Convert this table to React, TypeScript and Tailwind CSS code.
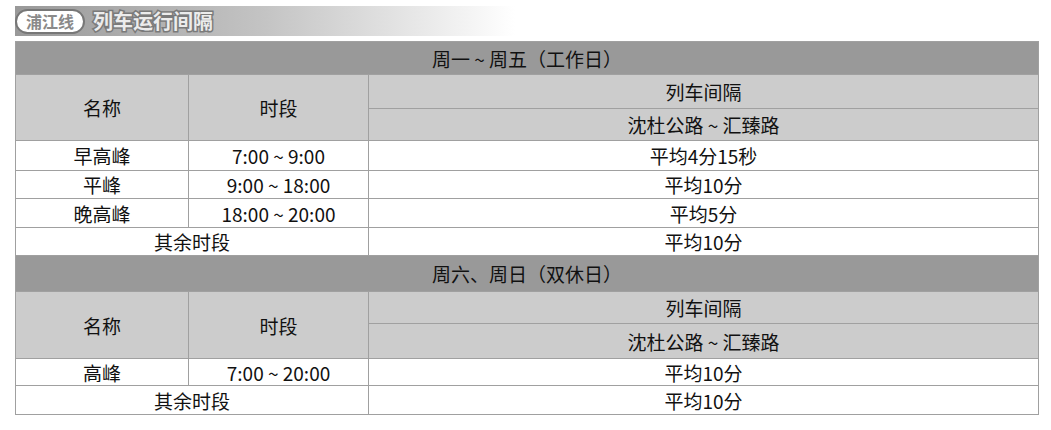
import React from 'react';

const font = { fontFamily: '"Noto Sans CJK SC", "Noto Sans", sans-serif' };

type Row = { name?: string; time?: string; span?: string; value: string; h: string };

const weekday: Row[] = [
  { name: '早高峰', time: '7:00 ~ 9:00', value: '平均4分15秒', h: 'h-[30px]' },
  { name: '平峰', time: '9:00 ~ 18:00', value: '平均10分', h: 'h-[28px]' },
  { name: '晚高峰', time: '18:00 ~ 20:00', value: '平均5分', h: 'h-[29px]' },
  { span: '其余时段', value: '平均10分', h: 'h-[28px]' },
];

const weekend: Row[] = [
  { name: '高峰', time: '7:00 ~ 20:00', value: '平均10分', h: 'h-[27px]' },
  { span: '其余时段', value: '平均10分', h: 'h-[29px]' },
];

const cell = 'border border-[#a0a0a0] p-0 text-center align-middle font-normal';

const Section = ({ title, rows, barH, h1, h2 }: { title: string; rows: Row[]; barH: string; h1: string; h2: string }) => (
  <>
    <tr className={barH}>
      <th colSpan={3} className={`${cell} bg-[#999999]`}>{title}</th>
    </tr>
    <tr className={h1}>
      <th rowSpan={2} className={`${cell} bg-[#cccccc]`}>名称</th>
      <th rowSpan={2} className={`${cell} bg-[#cccccc]`}>时段</th>
      <th className={`${cell} bg-[#cccccc]`}>列车间隔</th>
    </tr>
    <tr className={h2}>
      <th className={`${cell} bg-[#cccccc]`}>沈杜公路 ~ 汇臻路</th>
    </tr>
    {rows.map((r, i) => (
      <tr key={i} className={r.h}>
        {r.span ? (
          <td colSpan={2} className={cell}>{r.span}</td>
        ) : (
          <>
            <td className={cell}>{r.name}</td>
            <td className={cell}>{r.time}</td>
          </>
        )}
        <td className={cell}>{r.value}</td>
      </tr>
    ))}
  </>
);

export default function App() {
  return (
    <div className="w-[1051px] h-[430px] bg-white text-[#111] overflow-hidden" style={font}>
      <div className="pl-[15px] pt-[6px] h-[36px]">
        <div className="flex items-center h-[30px] w-[500px] bg-gradient-to-r from-[#999999] via-[#c4c4c4] to-white">
          <span className="flex items-center justify-center h-[25px] w-[70px] rounded-full bg-white border-2 border-[#777] text-[16px] font-bold text-[#8a8a8a] leading-none">
            浦江线
          </span>
          <span className="ml-[8px] text-[20px] font-bold text-[#ececec] leading-none [-webkit-text-stroke:3px_#7a7a7a] [paint-order:stroke_fill]">
            列车运行间隔
          </span>
        </div>
      </div>
      <div className="pl-[15px] pt-[5px]">
        <table className="w-[1024px] border-collapse table-fixed text-[19px] leading-none">
          <colgroup>
            <col className="w-[173px]" />
            <col className="w-[180px]" />
            <col />
          </colgroup>
          <tbody>
            <Section title="周一 ~ 周五（工作日）" rows={weekday} barH="h-[33px]" h1="h-[34px]" h2="h-[32px]" />
            <Section title="周六、周日（双休日）" rows={weekend} barH="h-[36px]" h1="h-[32px]" h2="h-[35px]" />
          </tbody>
        </table>
      </div>
    </div>
  );
}
